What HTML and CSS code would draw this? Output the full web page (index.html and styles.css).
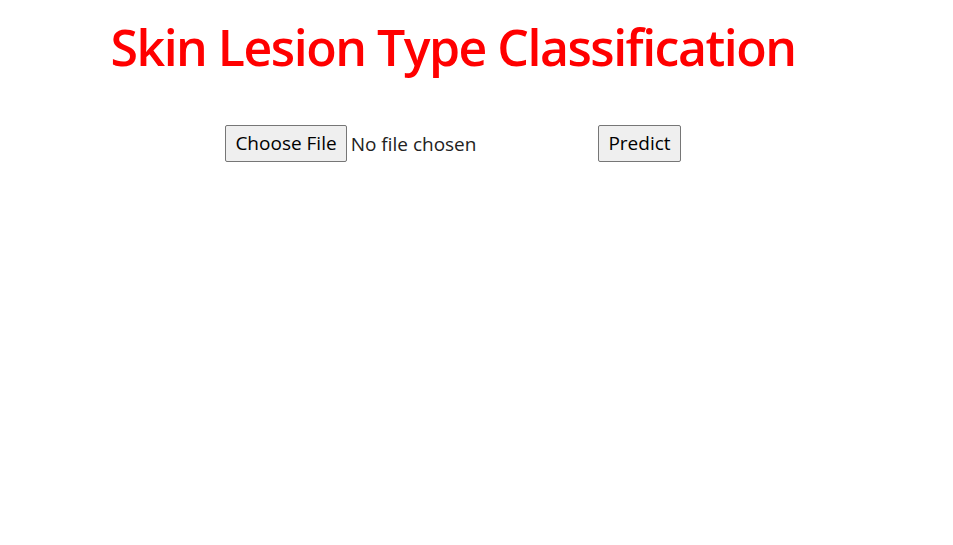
FILE: index.html
```html
<!DOCTYPE html>
<html>
<head>
<meta charset="utf-8">
<title>Skin Lesion Type Classification</title>
<link rel="stylesheet" href="styles.css">
</head>
<body>
<div class="page">
  <h1 class="title">Skin Lesion Type Classification</h1>
  <form class="upload">
    <div class="file">
      <button type="button" class="btn">Choose File</button>
      <span class="file-name">No file chosen</span>
    </div>
    <button type="button" class="btn">Predict</button>
  </form>
</div>
</body>
</html>
```
FILE: styles.css
```css
html, body {
  margin: 0;
  padding: 0;
  background: #ffffff;
}
body {
  font-family: "Open Sans", "Noto Sans", sans-serif;
}
.page {
  width: 906px;
  display: flex;
  flex-direction: column;
  align-items: center;
}
.title {
  margin: 15px 0 0 0;
  color: #ff0000;
  font-size: 50px;
  font-weight: 600;
  line-height: 64px;
  letter-spacing: -1.5px;
}
.upload {
  margin-top: 46px;
  display: flex;
  align-items: center;
  gap: 4px;
}
.file {
  width: 369px;
  display: flex;
  align-items: center;
}
.btn {
  font-family: inherit;
  font-size: 19px;
  line-height: 27px;
  color: #000000;
  background: #efefef;
  border: 1px solid #767676;
  border-radius: 2px;
  padding: 4px 9px;
  margin: 0;
}
.file-name {
  margin-left: 4px;
  font-size: 19px;
  color: #222222;
}
```
